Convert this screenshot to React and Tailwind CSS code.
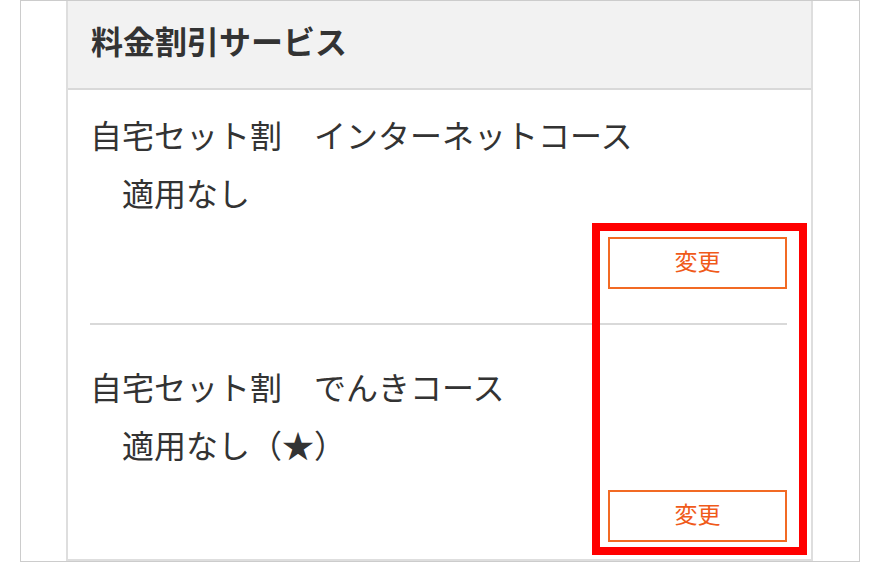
const font = { fontFamily: '"Noto Sans CJK JP", "Noto Sans", sans-serif' }

function ChangeButton() {
  return (
    <button className="flex h-[52px] w-[179px] items-center justify-center border-2 border-[#f26a24] bg-white pb-[5px] text-[23px] leading-none text-[#f05a1a]">
      変更
    </button>
  )
}

function DiscountRow({ title, status, topPad, bottomPad, divider }) {
  return (
    <div className={`flex flex-col ${topPad} ${bottomPad} ${divider ? "border-b-2 border-[#d9d9d9]" : ""}`}>
      <p className="text-[32px] leading-[58px] text-[#333]">{title}</p>
      <p className="text-[32px] leading-[58px] text-[#333]">{status}</p>
      <div className="mt-[16px] flex justify-end">
        <ChangeButton />
      </div>
    </div>
  )
}

export default function App() {
  return (
    <div className="h-[562px] w-[880px] bg-white" style={font}>
      <div className="mx-[20px] flex h-[562px] border border-[#cccccc] pl-[45px] pr-[46px]">
        <div className="relative flex flex-1 flex-col border-x-2 border-b-2 border-[#dedede]">
          <div className="h-[89px] border-b-2 border-[#d9d9d9] bg-[#f2f2f2] pl-[23px] pr-[24px] pt-[23px]">
            <h2 className="text-[32px] font-bold leading-[32px] text-[#333]">料金割引サービス</h2>
          </div>
          <div className="flex flex-1 flex-col pl-[22px] pr-[24px]">
            <DiscountRow
              title="自宅セット割　インターネットコース"
              status="　適用なし"
              topPad="pt-[15px]"
              bottomPad="pb-[34px]"
              divider
            />
            <div className="flex flex-1 flex-col justify-between pt-[32px] pb-[17px]">
              <div>
                <p className="text-[32px] leading-[58px] text-[#333]">自宅セット割　でんきコース</p>
                <p className="text-[32px] leading-[58px] text-[#333]">　適用なし（★）</p>
              </div>
              <div className="flex justify-end">
                <ChangeButton />
              </div>
            </div>
          </div>
          <div className="pointer-events-none absolute left-[524px] top-[222px] h-[332px] w-[215px] border-[8px] border-[#ff0000]" />
        </div>
      </div>
    </div>
  )
}
